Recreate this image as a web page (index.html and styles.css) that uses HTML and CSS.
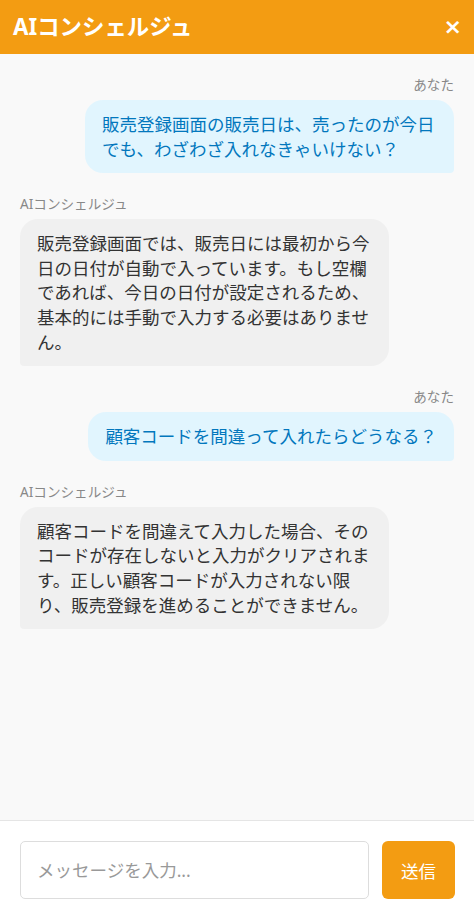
FILE: index.html
```html
<!DOCTYPE html>
<html lang="ja">
<head>
<meta charset="utf-8">
<title>AIコンシェルジュ</title>
<link rel="stylesheet" href="styles.css">
</head>
<body>
<div class="chat">
  <header class="chat-header">
    <h1 class="chat-title">AIコンシェルジュ</h1>
    <button class="chat-close" type="button" aria-label="閉じる">×</button>
  </header>
  <main class="chat-messages">
    <div class="msg msg-user">
      <div class="msg-label">あなた</div>
      <div class="bubble bubble-user">販売登録画面の販売日は、売ったのが今日でも、わざわざ入れなきゃいけない？</div>
    </div>
    <div class="msg msg-ai">
      <div class="msg-label">AIコンシェルジュ</div>
      <div class="bubble bubble-ai">販売登録画面では、販売日には最初から今日の日付が自動で入っています。もし空欄であれば、今日の日付が設定されるため、基本的には手動で入力する必要はありません。</div>
    </div>
    <div class="msg msg-user">
      <div class="msg-label">あなた</div>
      <div class="bubble bubble-user">顧客コードを間違って入れたらどうなる？</div>
    </div>
    <div class="msg msg-ai">
      <div class="msg-label">AIコンシェルジュ</div>
      <div class="bubble bubble-ai">顧客コードを間違えて入力した場合、そのコードが存在しないと入力がクリアされます。正しい顧客コードが入力されない限り、販売登録を進めることができません。</div>
    </div>
  </main>
  <footer class="chat-input">
    <input class="input-field" type="text" placeholder="メッセージを入力...">
    <button class="send-btn" type="button">送信</button>
  </footer>
</div>
</body>
</html>
```

FILE: styles.css
```css
* { box-sizing: border-box; }
html, body { margin: 0; padding: 0; height: 100%; }
body {
  font-family: "Noto Sans", "Noto Sans CJK JP", sans-serif;
  color: #333;
  background: #f9f9f9;
}
.chat {
  display: flex;
  flex-direction: column;
  height: 100vh;
}
.chat-header {
  flex: 0 0 54px;
  background: #f39c12;
  color: #fff;
  display: flex;
  align-items: center;
  justify-content: space-between;
  padding: 0 12px 0 13px;
}
.chat-title {
  margin: 0;
  font-size: 22.4px;
  font-weight: 700;
  line-height: 1;
}
.chat-close {
  background: none;
  border: none;
  color: #fff;
  font-family: "DejaVu Sans", sans-serif;
  font-size: 22px;
  font-weight: 700;
  line-height: 1;
  padding: 0;
  cursor: pointer;
}
.chat-messages {
  flex: 1 1 auto;
  overflow-y: auto;
  padding: 22px 20px;
  background: #f9f9f9;
  display: flex;
  flex-direction: column;
}
.msg {
  display: flex;
  flex-direction: column;
  margin-bottom: 22px;
}
.msg-user { align-items: flex-end; }
.msg-ai { align-items: flex-start; }
.msg-label {
  font-size: 13.6px;
  line-height: 18px;
  color: #888;
  margin-bottom: 6px;
}
.bubble {
  max-width: 85%;
  padding: 12px 17px;
  font-size: 17.5px;
  line-height: 24.6px;
  border-radius: 18px;
  word-break: break-all;
}
.bubble-user {
  background: #e1f5fe;
  color: #0277bd;
  border-bottom-right-radius: 4px;
}
.bubble-ai {
  background: #f0f0f0;
  color: #333;
  border-bottom-left-radius: 4px;
}
.chat-input {
  flex: 0 0 auto;
  background: #fff;
  border-top: 1px solid #e5e5e5;
  padding: 20px 19px 17px 20px;
  display: flex;
  gap: 13px;
}
.input-field {
  flex: 1 1 auto;
  min-width: 0;
  height: 58px;
  border: 1px solid #ddd;
  border-radius: 5px;
  padding: 0 16px;
  font-family: "Noto Sans", "Noto Sans CJK JP", sans-serif;
  font-size: 17.5px;
  color: #333;
  background: #fff;
}
.input-field::placeholder { color: #999; }
.send-btn {
  flex: 0 0 auto;
  height: 58px;
  padding: 0 19px;
  border: none;
  border-radius: 6px;
  background: #f39c12;
  color: #fff;
  font-family: "Noto Sans", "Noto Sans CJK JP", sans-serif;
  font-size: 17.5px;
}
```
